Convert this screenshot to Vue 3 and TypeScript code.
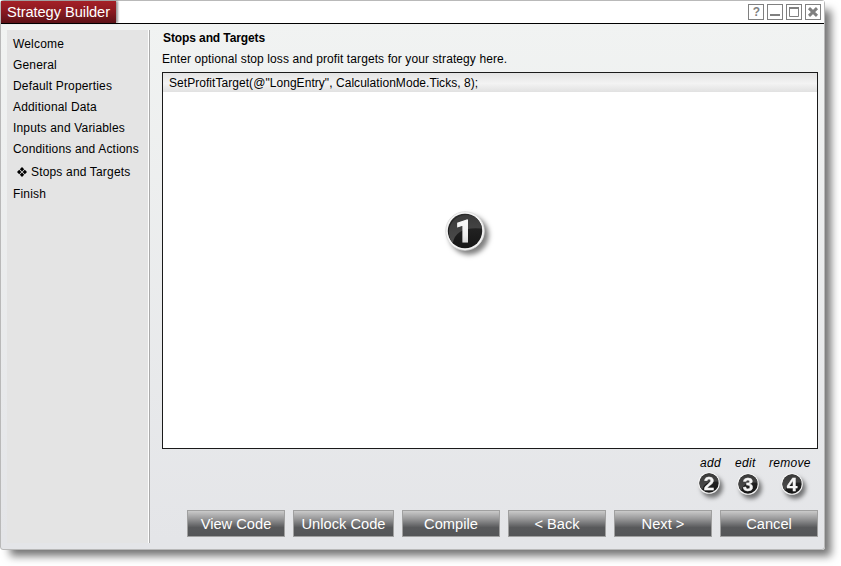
<script setup lang="ts">
interface Step { label: string; current?: boolean }
interface Action { label: string; badge: string; cls: string }

const steps: Step[] = [
  { label: 'Welcome' },
  { label: 'General' },
  { label: 'Default Properties' },
  { label: 'Additional Data' },
  { label: 'Inputs and Variables' },
  { label: 'Conditions and Actions' },
  { label: 'Stops and Targets', current: true },
  { label: 'Finish' },
]
const actions: Action[] = [
  { label: 'add', badge: '2', cls: 'add' },
  { label: 'edit', badge: '3', cls: 'edit' },
  { label: 'remove', badge: '4', cls: 'remove' },
]
const buttons: string[] = ['View Code', 'Unlock Code', 'Compile', '< Back', 'Next >', 'Cancel']
</script>

<template>
  <div class="desktop">
    <div class="window">
      <header class="titlebar">
        <h1 class="title"><span>Strategy Builder</span></h1>
        <div class="controls">
          <svg class="control" viewBox="0 0 16 16"><rect x=".5" y=".5" width="15" height="15" /><text x="8.3" y="12" text-anchor="middle">?</text></svg>
          <svg class="control" viewBox="0 0 16 16"><rect x=".5" y=".5" width="15" height="15" /><path d="M3 11H13" stroke-width="2" /></svg>
          <svg class="control" viewBox="0 0 16 16"><rect x=".5" y=".5" width="15" height="15" /><path d="M3.5 3V12.5H12.5V3" /><path d="M3 4H13" stroke-width="2" /></svg>
          <svg class="control" viewBox="0 0 16 16"><rect x=".5" y=".5" width="15" height="15" /><path d="M4 4.2L12 11.8M12 4.2L4 11.8" stroke-width="3" /></svg>
        </div>
      </header>
      <div class="body">
        <nav class="sidebar">
          <div v-for="s in steps" :key="s.label" class="step" :class="{ current: s.current }">
            <svg v-if="s.current" class="marker" viewBox="0 0 10 10"><path d="M5 0L7.2 2.2L5 4.4L2.8 2.2ZM5 5.6L7.2 7.8L5 10L2.8 7.8ZM0 5L2.2 2.8L4.4 5L2.2 7.2ZM5.6 5L7.8 2.8L10 5L7.8 7.2Z" /></svg>
            <span>{{ s.label }}</span>
          </div>
        </nav>
        <main class="content">
          <h2 class="heading"><span>Stops and Targets</span></h2>
          <p class="intro"><span>Enter optional stop loss and profit targets for your strategy here.</span></p>
          <div class="list">
            <div class="row"><span>SetProfitTarget(@"LongEntry", CalculationMode.Ticks, 8);</span></div>
            <svg class="badge large" viewBox="0 0 40 40">
              <defs>
                <linearGradient id="ball" x1="0" y1="0" x2="0" y2="1">
                  <stop offset="0" stop-color="#2a2a2a" /><stop offset="1" stop-color="#161616" />
                </linearGradient>
                <linearGradient id="gloss" x1="0" y1="0" x2="0" y2="1">
                  <stop offset="0" stop-color="#3a3a3a" /><stop offset="1" stop-color="#4c4c4c" />
                </linearGradient>
                <linearGradient id="digit" x1="0" y1="0" x2="0" y2="1">
                  <stop offset="0" stop-color="#ffffff" /><stop offset=".6" stop-color="#eeeeee" /><stop offset="1" stop-color="#c4c4c4" />
                </linearGradient>
              </defs>
              <circle cx="20" cy="20" r="19.3" fill="#f4f4f4" stroke="#d8d8d8" stroke-width=".8" />
              <circle cx="20" cy="20" r="17.2" fill="url(#ball)" />
              <path d="M7.8 32A17.2 17.2 0 0 1 32 7.8Q37 13 37 17.5Q11 15 7.8 32Z" fill="url(#gloss)" />
              <text class="one" x="19.2" y="31" text-anchor="middle" fill="url(#digit)" stroke="url(#digit)" stroke-width="1.2">1</text>
            </svg>
          </div>
          <div class="actions">
            <div v-for="a in actions" :key="a.label" class="action" :class="a.cls">
              <span class="link">{{ a.label }}</span>
              <svg class="badge small" viewBox="0 0 22 22">
                <circle cx="11" cy="11" r="10.8" fill="#f4f4f4" />
                <circle cx="11" cy="11" r="9.7" fill="url(#ball)" />
                <path d="M4.1 17.8A9.7 9.7 0 0 1 17.8 4.1Q20.6 7 20.6 9.6Q6 8 4.1 17.8Z" fill="url(#gloss)" />
                <text x="11" y="17.6" font-size="19" text-anchor="middle" fill="#f5f5f5" stroke="#f5f5f5" stroke-width=".3">{{ a.badge }}</text>
              </svg>
            </div>
          </div>
          <footer class="buttons">
            <button v-for="(b, i) in buttons" :key="b" type="button" class="button" :class="{ wide: i === 1 }"><span>{{ b }}</span></button>
          </footer>
        </main>
      </div>
    </div>
  </div>
</template>

<style>
body { background: #fff; }
</style>
<style scoped>
* { box-sizing: border-box; }
.desktop { width: 841px; height: 566px; overflow: hidden; background: #fff; }
.window {
  width: 825px; height: 550px; display: flex; flex-direction: column;
  border: 1px solid #b9b9b9; border-radius: 3px;
  background: linear-gradient(#f1f3f2 20px, #e4e5e8 540px);
  box-shadow: 8px 8px 9px -2px rgba(0, 0, 0, .55);
  font: 12px "Liberation Sans", Arial, sans-serif; color: #000;
}
.titlebar { height: 23px; display: flex; justify-content: space-between; background: #fff; border-bottom: 1px solid #000; flex: none; }
.title {
  width: 115px; height: 22px; margin: 0; padding-left: 6px; white-space: nowrap;
  font-size: 14.67px; font-weight: 400; line-height: 22px; letter-spacing: -.08px; color: #fff;
  background: linear-gradient(#a52027, #881a20 50%, #5c1217); box-shadow: 2px 0 2px rgba(0, 0, 0, .4);
}
.controls { display: flex; gap: 3px; padding: 3px 3px 0 0; }
.control { width: 16px; height: 16px; fill: none; stroke: #808080; }
.control text { font: bold 12px "Liberation Sans", sans-serif; fill: #808080; stroke: none; }
.body { flex: 1; display: flex; padding: 6px; min-height: 0; }
.sidebar { width: 143px; flex: none; padding: 4px 0 0 6px; background: #e4e4e4; border-right: 1px solid #aaa; box-shadow: inset -1px 0 #fff; white-space: nowrap; letter-spacing: .17px; }
.step { height: 21px; line-height: 21px; display: flex; align-items: center; }
.step.current { height: 24px; padding-left: 4px; gap: 4px; }
.marker { width: 10px; height: 10px; }
.content { flex: 1; display: flex; flex-direction: column; padding-left: 12px; min-width: 0; }
.heading { margin: 0 0 0 1px; font-size: 12px; line-height: 16px; height: 16px; letter-spacing: -.1px; }
.intro { margin: 0; height: 26px; line-height: 26px; white-space: nowrap; letter-spacing: .095px; }
.list { height: 377px; border: 1px solid #1a1a1a; background: #fff; display: flex; flex-direction: column; flex: none; }
.row { height: 19px; line-height: 20px; padding-left: 6px; background: linear-gradient(#e3e3e3, #f3f3f3 55%, #e1e1e1); white-space: nowrap; letter-spacing: .05px; }
.badge { display: block; overflow: visible; font-family: "Liberation Sans", sans-serif; font-weight: 700; }
.large { width: 40px; height: 40px; margin: 119px 0 0 282px; filter: drop-shadow(4px 4px 2.5px rgba(0, 0, 0, .5)); }
.one { font: 700 31px Roboto, sans-serif; }
.small { width: 22px; height: 22px; filter: drop-shadow(3px 4px 2px rgba(0, 0, 0, .5)); }
.actions { height: 61px; padding: 6px 7px 0 0; display: flex; justify-content: flex-end; gap: 14px; flex: none; }
.action { display: flex; flex-direction: column; }
.link { font-style: italic; line-height: 16px; height: 17px; letter-spacing: .3px; }
.add { width: 21px; }
.edit { width: 20px; }
.remove { width: 42px; }
.add .small { margin-left: -2px; }
.edit .small { margin: 1px 0 0 2px; }
.remove .small { margin: 1px 0 0 12px; }
.buttons { display: flex; justify-content: flex-end; gap: 8px; }
.button {
  width: 98px; height: 27px; padding: 1px 0 0; border: 1px solid #a0a0a0; color: #fff;
  font: 14.67px/24px "Liberation Sans", Arial, sans-serif; white-space: nowrap;
  background: linear-gradient(#cacaca, #9a9a9b 30%, #58595b 66%, #555658);
}
.button.wide { width: 101px; }
</style>
